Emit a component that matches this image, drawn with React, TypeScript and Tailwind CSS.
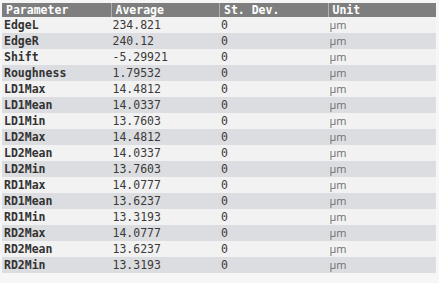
const rows = [
  { name: 'EdgeL', avg: '234.821' },
  { name: 'EdgeR', avg: '240.12' },
  { name: 'Shift', avg: '-5.29921' },
  { name: 'Roughness', avg: '1.79532' },
  { name: 'LD1Max', avg: '14.4812' },
  { name: 'LD1Mean', avg: '14.0337' },
  { name: 'LD1Min', avg: '13.7603' },
  { name: 'LD2Max', avg: '14.4812' },
  { name: 'LD2Mean', avg: '14.0337' },
  { name: 'LD2Min', avg: '13.7603' },
  { name: 'RD1Max', avg: '14.0777' },
  { name: 'RD1Mean', avg: '13.6237' },
  { name: 'RD1Min', avg: '13.3193' },
  { name: 'RD2Max', avg: '14.0777' },
  { name: 'RD2Mean', avg: '13.6237' },
  { name: 'RD2Min', avg: '13.3193' },
];

const mono = "font-['DejaVu_Sans_Mono','Liberation_Mono',monospace]";

export default function App() {
  return (
    <div className="w-[439px] h-[283px] overflow-hidden bg-[#f6f6f6] pt-[3px] pl-[2px]">
      <div className={`w-[434px] text-[11.5px] ${mono}`}>
        {/* Header */}
        <div className="grid grid-cols-4 h-[14px] bg-[#7e7e7e] text-white font-bold leading-[14px]">
          <div className="pl-[4px]">Parameter</div>
          <div className="pl-[4px] border-l border-[#b0b0b0]">Average</div>
          <div className="pl-[4px] border-l border-[#b0b0b0]">St. Dev.</div>
          <div className="pl-[4px] border-l border-[#b0b0b0]">Unit</div>
        </div>

        {/* Rows */}
        {rows.map((row, i) => (
          <div
            key={row.name}
            className={`grid grid-cols-4 h-[16px] leading-[16px] ${i % 2 === 0 ? 'bg-[#f2f2f2]' : 'bg-[#dcdde1]'}`}
          >
            <div className="pl-[2px] font-bold text-[#333333]">{row.name}</div>
            <div className="pl-[2px] text-[#3a3a3a]">{row.avg}</div>
            <div className="pl-[2px] text-[#3a3a3a]">0</div>
            <div className="pl-[2px] text-[11px] text-[#707070] font-['Open_Sans','Noto_Sans',sans-serif]">µm</div>
          </div>
        ))}
      </div>
    </div>
  );
}
